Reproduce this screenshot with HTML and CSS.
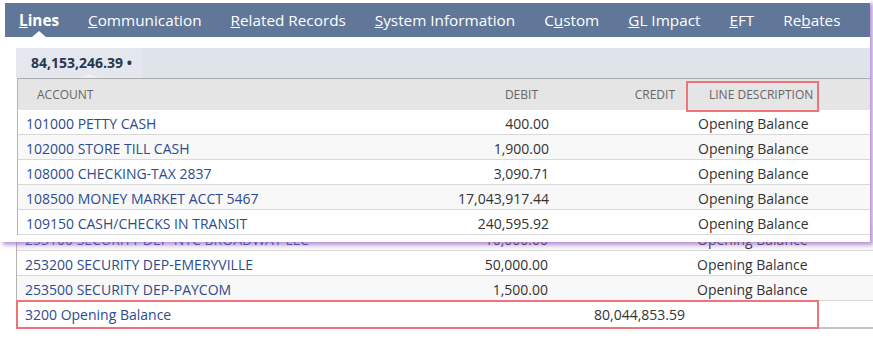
FILE: index.html
```html
<!DOCTYPE html>
<html lang="en">
<head>
    <meta charset="UTF-8">
    <title>GL Lines</title>
    <link rel="stylesheet" href="styles.css">
</head>
<body>
<div class="page">

    <!-- Tabela de fundo (o topo fica coberto pelo recorte) -->
    <div class="base">
        <div class="grid">
            <div class="row alt"><div class="c acc">253100 SECURITY DEP-NYC BROADWAY LLC</div><div class="c num">10,000.00</div><div class="c num"></div><div class="c desc">Opening Balance</div></div>
            <div class="row"><div class="c acc">253200 SECURITY DEP-EMERYVILLE</div><div class="c num">50,000.00</div><div class="c num"></div><div class="c desc">Opening Balance</div></div>
            <div class="row alt"><div class="c acc">253500 SECURITY DEP-PAYCOM</div><div class="c num">1,500.00</div><div class="c num"></div><div class="c desc">Opening Balance</div></div>
            <div class="row last"><div class="c acc">3200 Opening Balance</div><div class="c num"></div><div class="c num">80,044,853.59</div><div class="c desc"></div></div>
        </div>
        <div class="mark mark-row"></div>
    </div>

    <!-- Recorte sobreposto -->
    <div class="card">
        <nav class="tabs">
            <span class="tab active"><u>L</u>ines</span>
            <span class="tab"><u>C</u>ommunication</span>
            <span class="tab"><u>R</u>elated Records</span>
            <span class="tab"><u>S</u>ystem Information</span>
            <span class="tab">C<u>u</u>stom</span>
            <span class="tab"><u>G</u>L Impact</span>
            <span class="tab"><u>E</u>FT</span>
            <span class="tab">Re<u>b</u>ates</span>
        </nav>

        <div class="subtabs">
            <span class="subtab">84,153,246.39 &bull;</span>
        </div>

        <div class="grid">
            <div class="row head">
                <div class="c acc">Account</div>
                <div class="c num">Debit</div>
                <div class="c num">Credit</div>
                <div class="c desc">Line Description</div>
            </div>
            <div class="row"><div class="c acc">101000 PETTY CASH</div><div class="c num">400.00</div><div class="c num"></div><div class="c desc">Opening Balance</div></div>
            <div class="row alt"><div class="c acc">102000 STORE TILL CASH</div><div class="c num">1,900.00</div><div class="c num"></div><div class="c desc">Opening Balance</div></div>
            <div class="row"><div class="c acc">108000 CHECKING-TAX 2837</div><div class="c num">3,090.71</div><div class="c num"></div><div class="c desc">Opening Balance</div></div>
            <div class="row alt"><div class="c acc">108500 MONEY MARKET ACCT 5467</div><div class="c num">17,043,917.44</div><div class="c num"></div><div class="c desc">Opening Balance</div></div>
            <div class="row"><div class="c acc">109150 CASH/CHECKS IN TRANSIT</div><div class="c num">240,595.92</div><div class="c num"></div><div class="c desc">Opening Balance</div></div>
        </div>
        <div class="mark mark-head"></div>
    </div>

</div>
</body>
</html>
```

FILE: styles.css
```css
/* Global */
body {
    margin: 0;
    font-family: "Open Sans", "Liberation Sans", sans-serif;
    background: #fff;
    color: #333;
}

.page {
    position: relative;
    width: 873px;
    height: 343px;
    overflow: hidden;
}

/* Tabela de fundo */
.base {
    padding-top: 226px;
    padding-left: 16px;
}

.base .grid {
    border-bottom: 2px solid #c4c4c4;
}

/* Grade das linhas */
.grid {
    border-left: 1px solid #b4b4b4;
    box-shadow: inset 1px 0 0 #e2e2e2;
}

.row {
    display: grid;
    grid-template-columns: 403px 138px 137px 1fr;
    height: 24px;
    border-bottom: 1px solid #d8d8d8;
    background: #fff;
    font-size: 14px;
    line-height: 27px;
}

.row.alt {
    background: #f8f8f8;
}

.row.last {
    height: 26px;
    border-bottom: none;
    background: #fff;
}

.c {
    white-space: nowrap;
    overflow: hidden;
}

.acc {
    padding-left: 8px;
    color: #2d4b8e;
}

.num {
    text-align: right;
    padding-right: 10px;
}

.desc {
    padding-left: 2px;
}

/* Cabeçalho */
.row.head {
    height: 31px;
    border-top: 1px solid #ababab;
    border-bottom: none;
    background: #e5e5e5;
    font-size: 12px;
    line-height: 32px;
    text-transform: uppercase;
    color: #666;
}

.row.head .acc {
    padding-left: 19px;
    color: #666;
}

.row.head .num {
    padding-right: 21px;
}

.row.head .desc {
    padding-left: 13px;
}

/* Recorte sobreposto */
.card {
    position: absolute;
    left: 0;
    top: 0;
    width: 870px;
    height: 242px;
    overflow: hidden;
    background: #fff;
    box-shadow: 3px 3px 4px rgba(150, 90, 200, 0.65);
}

.card .grid {
    margin-left: 17px;
}

/* Abas */
.tabs {
    display: flex;
    gap: 29px;
    height: 34px;
    margin: 3px 0 0 5px;
    padding-left: 14px;
    background: #607799;
    font-size: 15.3px;
    line-height: 34px;
    color: #fff;
}

.tab {
    position: relative;
    white-space: nowrap;
}

.tab.active {
    font-weight: bold;
}

.tab.active::after {
    content: "";
    position: absolute;
    left: 50%;
    bottom: 0;
    margin-left: -7px;
    border: 6px solid transparent;
    border-bottom-color: #fff;
    border-top: none;
    border-left-width: 7px;
    border-right-width: 7px;
}

/* Sub-abas */
.subtabs {
    display: flex;
    height: 30px;
    margin: 11px 0 0 16px;
    background: #dfe4eb;
}

.subtab {
    position: relative;
    padding: 0 11px 0 15px;
    background: #e4e8ee;
    font-size: 14px;
    font-weight: bold;
    line-height: 30px;
    color: #28364f;
}

.subtab::after {
    content: "";
    position: absolute;
    left: 64px;
    bottom: 0;
    border: 4px solid transparent;
    border-bottom-color: #f2f2f2;
    border-top: none;
    border-left-width: 9px;
    border-right-width: 9px;
}

/* Marcações vermelhas */
.mark {
    position: absolute;
    border: 2px solid #f0737b;
    box-sizing: border-box;
}

.mark-head {
    left: 686px;
    top: 81px;
    width: 133px;
    height: 31px;
}

.mark-row {
    left: 16px;
    top: 300px;
    width: 803px;
    height: 29px;
}
```
